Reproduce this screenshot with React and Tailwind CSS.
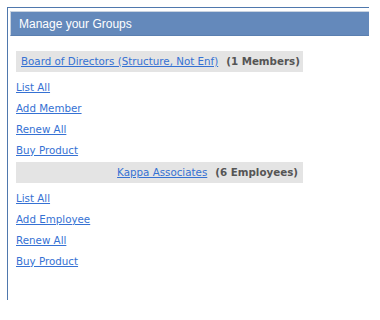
import React from 'react';

const groups = [
  {
    name: 'Board of Directors (Structure, Not Enf)',
    count: '(1 Members)',
    align: 'justify-start',
    links: ['List All', 'Add Member', 'Renew All', 'Buy Product'],
  },
  {
    name: 'Kappa Associates',
    count: '(6 Employees)',
    align: 'justify-end',
    links: ['List All', 'Add Employee', 'Renew All', 'Buy Product'],
  },
];

const App = () => {
  return (
    <div className="w-[380px] h-[320px] bg-white pt-[7px] pl-[7px]">
      <div className="w-[362px] h-[293px] border-t border-l border-[#4f78ad] pt-[3px] pl-[2px]">
        <div className="h-[25px] bg-[#6489bb] border-t border-l border-[#c9d3e0] border-b border-b-[#5a7fb0] flex items-center pl-2 text-white text-[12px] font-['Liberation_Sans',Arial,sans-serif]">
          Manage your Groups
        </div>

        <div className="pl-[6px] pt-[15px] font-['DejaVu_Sans',Verdana,sans-serif] text-[10.3px] whitespace-nowrap">
          {groups.map((g) => (
            <div key={g.name} className="mb-[1px]">
              <div className={`w-[287px] h-[21px] bg-[#e4e4e4] flex items-center px-[5px] gap-[8px] ${g.align}`}>
                <a href="#" className="text-[#3571d3] underline underline-offset-[1px]">{g.name}</a>
                <span className="font-bold text-[#555555]">{g.count}</span>
              </div>
              <div className="flex flex-col pt-[5px]">
                {g.links.map((l) => (
                  <div key={l} className="h-[21px] flex items-center">
                    <a href="#" className="text-[#3571d3] underline underline-offset-[1px]">{l}</a>
                  </div>
                ))}
              </div>
            </div>
          ))}
        </div>
      </div>
    </div>
  );
};

export default App;
